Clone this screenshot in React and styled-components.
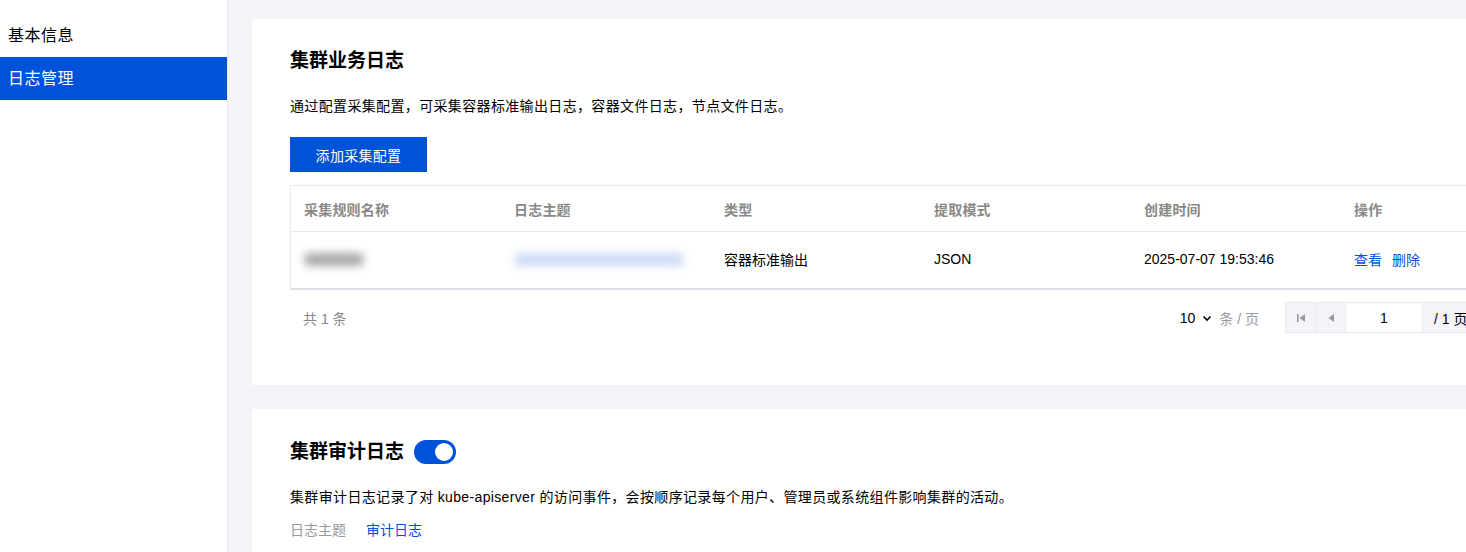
import React from "react";
import styled, { createGlobalStyle } from "styled-components";

const Global = createGlobalStyle`
  html, body { margin: 0; padding: 0; }
  body {
    font-family: "Liberation Sans", "Noto Sans CJK SC", sans-serif;
    color: #000;
    background: #f3f4f7;
    overflow: hidden;
  }
  * { box-sizing: border-box; }
`;

const Page = styled.div`
  display: flex;
  width: 1466px;
  height: 552px;
  overflow: hidden;
`;

const Sidebar = styled.nav`
  width: 228px;
  flex: none;
  background: #fff;
  padding-top: 14px;
  border-right: 1px solid #e7eaef;
`;

const NavItem = styled.div`
  height: 43px;
  line-height: 43px;
  padding-left: 8px;
  font-size: 16px;
  letter-spacing: 0.5px;
  color: ${(p) => (p.$active ? "#fff" : "#000")};
  background: ${(p) => (p.$active ? "#0052d9" : "transparent")};
`;

const Main = styled.main`
  flex: 1;
  padding: 19px 0 0 24px;
  display: flex;
  flex-direction: column;
  gap: 24px;
  overflow: hidden;
`;

const Card = styled.section`
  width: 1400px;
  flex: none;
  background: #fff;
  padding: ${(p) => p.$pad || "30px 38px 52px"};
`;

const Title = styled.h2`
  margin: 0;
  font-size: 19px;
  font-weight: 700;
  line-height: 24px;
  color: #000;
  display: flex;
  align-items: center;
  gap: 10px;
`;

const Desc = styled.p`
  margin: ${(p) => p.$m || "22px 0 0"};
  font-size: 14px;
  line-height: 22px;
  letter-spacing: 0.35px;
  color: #000;
`;

const PrimaryButton = styled.button`
  margin-top: 20px;
  height: 35px;
  width: 137px;
  border: none;
  background: #0052d9;
  color: #fff;
  font-size: 14px;
  letter-spacing: 0.3px;
  font-family: inherit;
  cursor: pointer;
`;

const Table = styled.div`
  margin-top: 13px;
  width: 1260px;
  border: 1px solid #e7eaef;
  border-bottom: 2px solid #dde0e6;
`;

const Row = styled.div`
  display: grid;
  grid-template-columns: repeat(6, 210px);
  height: ${(p) => p.$h}px;
  align-items: center;
  border-top: ${(p) => (p.$first ? "none" : "1px solid #e7eaef")};
`;

const HeadCell = styled.div`
  padding-left: 13px;
  font-size: 14px;
  font-weight: 700;
  letter-spacing: 0.2px;
  color: #888;
`;

const Cell = styled.div`
  padding-left: 13px;
  padding-bottom: 2px;
  font-size: 14px;
  color: #000;
  display: flex;
  gap: 10px;
`;

const Blurred = styled.span`
  display: inline-block;
  width: ${(p) => p.$w}px;
  height: 13px;
  border-radius: 6px;
  background: ${(p) => p.$c};
  filter: blur(4px);
`;

const Link = styled.a`
  color: #0052d9;
  text-decoration: none;
  cursor: pointer;
`;

const Footer = styled.div`
  width: 1260px;
  display: flex;
  align-items: center;
  padding-top: 12px;
  font-size: 14px;
`;

const Total = styled.span`
  padding-left: 13px;
  color: #888;
  flex: 1;
`;

const PageSize = styled.div`
  display: flex;
  align-items: center;
  gap: 6px;
  color: #000;
  margin-right: 26px;
`;

const Muted = styled.span`
  color: #999;
`;

const Pager = styled.div`
  display: flex;
  height: 31px;
  border: 1px solid #e7eaef;
  margin-right: -2px;
`;

const PagerBtn = styled.div`
  width: 30px;
  background: #f3f4f7;
  border-right: 1px solid #e7eaef;
  display: flex;
  align-items: center;
  justify-content: center;
  &:last-child { border-right: none; }
`;

const PagerInput = styled.div`
  width: 77px;
  display: flex;
  align-items: center;
  justify-content: center;
  border-right: 1px solid #e7eaef;
  font-size: 14px;
`;

const PagerTotal = styled.div`
  width: 68px;
  display: flex;
  align-items: center;
  padding-left: 11px;
  background: #f3f4f7;
  border-right: 1px solid #e7eaef;
  white-space: nowrap;
`;

const Toggle = styled.span`
  width: 42px;
  height: 24px;
  border-radius: 12px;
  background: #0052d9;
  position: relative;
  display: inline-block;
  &::after {
    content: "";
    position: absolute;
    right: 3px;
    top: 3px;
    width: 18px;
    height: 18px;
    border-radius: 50%;
    background: #fff;
  }
`;

const Meta = styled.div`
  margin-top: 12px;
  display: flex;
  gap: 20px;
  font-size: 14px;
  line-height: 20px;
`;

const Chevron = () => (
  <svg width="12" height="12" viewBox="0 0 12 12">
    <path d="M2.5 4.5 L6 8 L9.5 4.5" fill="none" stroke="#000" strokeWidth="1.6" />
  </svg>
);

const FirstIcon = () => (
  <svg width="10" height="10" viewBox="0 0 10 10">
    <rect x="1" y="1" width="1.6" height="8" fill="#999" />
    <path d="M9 1 L3.5 5 L9 9 Z" fill="#999" />
  </svg>
);

const PrevIcon = () => (
  <svg width="10" height="10" viewBox="0 0 10 10">
    <path d="M8 1 L2.5 5 L8 9 Z" fill="#999" />
  </svg>
);

const NextIcon = () => (
  <svg width="10" height="10" viewBox="0 0 10 10">
    <path d="M2 1 L7.5 5 L2 9 Z" fill="#999" />
  </svg>
);

const LastIcon = () => (
  <svg width="10" height="10" viewBox="0 0 10 10">
    <path d="M1 1 L6.5 5 L1 9 Z" fill="#999" />
    <rect x="7.4" y="1" width="1.6" height="8" fill="#999" />
  </svg>
);

const headers = ["采集规则名称", "日志主题", "类型", "提取模式", "创建时间", "操作"];

export default function App() {
  return (
    <>
      <Global />
      <Page>
        <Sidebar>
          <NavItem>基本信息</NavItem>
          <NavItem $active>日志管理</NavItem>
        </Sidebar>
        <Main>
          <Card>
            <Title>集群业务日志</Title>
            <Desc>通过配置采集配置，可采集容器标准输出日志，容器文件日志，节点文件日志。</Desc>
            <PrimaryButton>添加采集配置</PrimaryButton>
            <Table>
              <Row $h={45} $first>
                {headers.map((h) => (
                  <HeadCell key={h}>{h}</HeadCell>
                ))}
              </Row>
              <Row $h={57}>
                <Cell>
                  <Blurred $c="#a8a8a8" $w={60} />
                </Cell>
                <Cell>
                  <Blurred $c="#ccdaf6" $w={170} />
                </Cell>
                <Cell>容器标准输出</Cell>
                <Cell>JSON</Cell>
                <Cell>2025-07-07 19:53:46</Cell>
                <Cell>
                  <Link>查看</Link>
                  <Link>删除</Link>
                </Cell>
              </Row>
            </Table>
            <Footer>
              <Total>共 1 条</Total>
              <PageSize>
                <span>10</span>
                <Chevron />
                <Muted>条 / 页</Muted>
              </PageSize>
              <Pager>
                <PagerBtn>
                  <FirstIcon />
                </PagerBtn>
                <PagerBtn>
                  <PrevIcon />
                </PagerBtn>
                <PagerInput>1</PagerInput>
                <PagerTotal>/ 1 页</PagerTotal>
                <PagerBtn>
                  <NextIcon />
                </PagerBtn>
                <PagerBtn>
                  <LastIcon />
                </PagerBtn>
              </Pager>
            </Footer>
          </Card>
          <Card $pad="31px 38px 30px">
            <Title>
              集群审计日志
              <Toggle />
            </Title>
            <Desc $m="22px 0 0">
              集群审计日志记录了对 kube-apiserver 的访问事件，会按顺序记录每个用户、管理员或系统组件影响集群的活动。
            </Desc>
            <Meta>
              <Muted>日志主题</Muted>
              <Link>审计日志</Link>
            </Meta>
          </Card>
        </Main>
      </Page>
    </>
  );
}
